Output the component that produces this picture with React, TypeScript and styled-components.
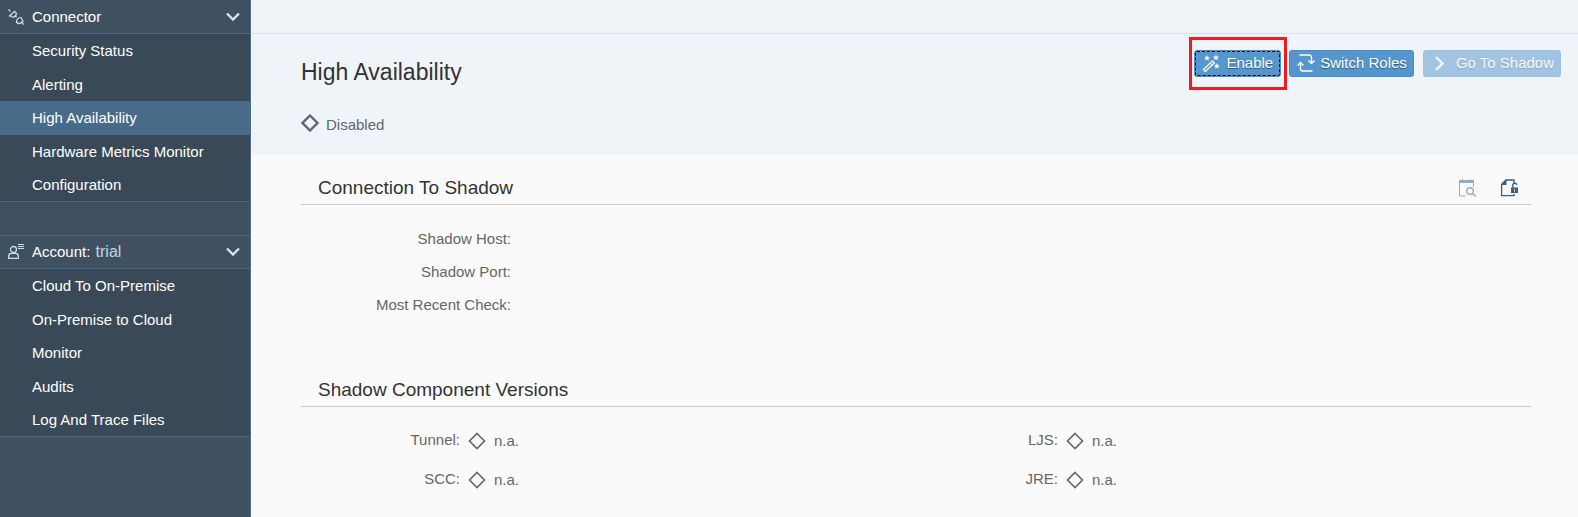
import React from "react";
import styled, { createGlobalStyle } from "styled-components";

const GlobalStyle = createGlobalStyle`
  * { box-sizing: border-box; }
  body {
    margin: 0;
    background: #fafafa;
    font: 15px/18px "Liberation Sans", Arial, sans-serif;
    color: #333;
  }
  h1, h2, ul, dl, dd, p { margin: 0; padding: 0; font-weight: normal; }
  button { font: inherit; cursor: pointer; }
`;

const Shell = styled.div`
  display: grid;
  grid-template-columns: 251px minmax(0, 1fr);
  min-height: 100vh;
`;

const Sidebar = styled.nav`
  display: flex;
  flex-direction: column;
  gap: 33px;
  background: #3f5161;
  border-right: 1px solid #4f6f8d;
  color: #fff;
`;

const GroupHeader = styled.button<{ $ruled?: boolean }>`
  display: flex;
  align-items: center;
  width: 100%;
  height: 34px;
  padding: 0 9px 0 8px;
  gap: 8px;
  border: 0;
  border-top: ${(p) => (p.$ruled ? "1px solid #4f677d" : "0")};
  border-bottom: 1px solid #4b6781;
  background: transparent;
  color: #fff;
  text-align: left;
`;

const GroupTitle = styled.span`
  flex: 1;
`;

const GroupValue = styled.span`
  margin-left: 1px;
  font-size: 16px;
  color: #c3d3e2;
`;

const NavList = styled.ul`
  display: grid;
  grid-template-rows: 34px 33px 34px 33px 33px;
  list-style: none;
  background: #3a4957;
  border-bottom: 1px solid #4b6781;
`;

const NavItem = styled.li`
  display: flex;
`;

const NavLink = styled.a<{ $active?: boolean }>`
  display: flex;
  flex: 1;
  align-items: center;
  padding-left: 32px;
  color: #fff;
  text-decoration: none;
  background: ${(p) => (p.$active ? "#486b89" : "transparent")};
`;

const TopBar = styled.div`
  height: 34px;
  background: #eff4f9;
  border-bottom: 1px solid #d1e0ee;
`;

const PageHeader = styled.header`
  display: flex;
  justify-content: space-between;
  align-items: flex-start;
  height: 121px;
  padding: 0 17px 0 50px;
  background: #eff4f9;
`;

const PageTitle = styled.h1`
  padding-top: 24px;
  font-size: 23px;
  line-height: 28px;
`;

const Status = styled.p`
  display: flex;
  align-items: flex-start;
  gap: 7px;
  padding-top: 28px;
  color: #5e696e;
`;

const StatusText = styled.span`
  padding-top: 2px;
`;

const Toolbar = styled.div`
  display: flex;
  align-items: center;
  padding-top: 3px;
`;

const Highlight = styled.div`
  padding: 10px 3px 10px 2px;
  border: 3px solid #ed1c24;
`;

const ActionButton = styled.button<{ $gap?: number }>`
  display: flex;
  align-items: center;
  gap: ${(p) => p.$gap ?? 5}px;
  height: 27px;
  margin: 0 0 0 ${(p) => (p.$gap ? 9 : 2)}px;
  padding: 0 6px 2px 7px;
  border: 1px solid #4a8bc6;
  border-radius: 3px;
  background: #5496cd;
  color: #fff;
  text-shadow: 0 1px 1px rgba(0, 0, 0, 0.4);
  &:disabled {
    opacity: 0.5;
    cursor: default;
  }
`;

const FocusedButton = styled(ActionButton)`
  gap: 6px;
  margin: 0;
  padding: 0 7px 2px;
  outline: 1px dashed #000;
  outline-offset: -2px;
`;

const Section = styled.section`
  margin: 0 47px 0 50px;
`;

const SectionHeader = styled.div`
  display: flex;
  justify-content: space-between;
  align-items: flex-end;
  height: 50px;
  padding: 0 13px 5px 17px;
  border-bottom: 1px solid #ccc;
`;

const SectionTitle = styled.h2`
  font-size: 19px;
  line-height: 22px;
`;

const IconBar = styled.div`
  display: flex;
  gap: 24px;
  padding-bottom: 2px;
`;

const IconButton = styled.button`
  display: flex;
  padding: 0;
  border: 0;
  background: none;
  &:disabled { opacity: 0.5; }
`;

const Details = styled.dl`
  display: grid;
  grid-template-columns: 210px 1fr;
  row-gap: 15px;
  padding: 25px 0 43px;
`;

const Label = styled.dt`
  color: #666;
  text-align: right;
`;

const Versions = styled.dl`
  display: grid;
  grid-template-columns: 1fr 1fr;
  row-gap: 20px;
  padding: 24px 0;
`;

const Version = styled.div`
  display: grid;
  grid-template-columns: 159px 1fr;
  column-gap: 8px;
  &:nth-child(even) { margin-left: -17px; }
`;

const VersionValue = styled.dd`
  display: flex;
  align-items: center;
  gap: 8px;
  padding-top: 1px;
  color: #5e696e;
`;

const Icon = ({ size = 18, children }: { size?: number; children: React.ReactNode }) => (
  <svg width={size} height={size} viewBox={`0 0 ${size} ${size}`} fill="none" aria-hidden="true">
    {children}
  </svg>
);

const Diamond = ({ weight = 1.6 }: { weight?: number }) => (
  <Icon>
    <path d="M9 1.5 16.5 9 9 16.5 1.5 9Z" stroke="#5e696e" strokeWidth={weight} />
  </Icon>
);

const Chevron = () => (
  <Icon size={16}>
    <path d="m2 4.500 6 6 6-6" stroke="#cfe4f7" strokeWidth="2.4" />
  </Icon>
);

const PlugIcon = () => (
  <Icon size={16}>
    <g stroke="#c4dff6" strokeWidth="1.200">
      <path d="M.3.5 2.500 2.500M2 6.500l5-4.500M3 5.500c-.8 2 .8 3 3.300 2.300M6 3c2-.4 2.700 1.500 1.800 3M1 7.500l1.500-1.500M5.500 8.500l3.500-3.500M7 6.500l1.500 1.500" />
      <path d="M8.500 13.500c-.3-3 1.500-5 4.500-5l2 3.500-3 2.500ZM8 12.500l2.500 2.500M14 13.500l1.700 2" />
    </g>
  </Icon>
);

const AccountIcon = () => (
  <Icon size={16}>
    <g stroke="#c4dff6" strokeWidth="1.3">
      <circle cx="5.500" cy="5.500" r="3" />
      <path d="M.7 14.400v-2c0-2 1.300-3 2.800-3h4c1.500 0 2.800 1 2.800 3v2Z" />
      <path d="M10 .5h6M10 2.500h6M10 4.500h6" strokeWidth="1" />
    </g>
  </Icon>
);

const Star = ({ x, y }: { x: number; y: number }) => (
  <path
    transform={`translate(${x} ${y})`}
    d="M0-3 .8-.9 3-.9 1.300.6 2 2.800 0 1.500-2 2.800-1.300.6-3-.9-.8-.9Z"
    fill="#fff"
  />
);

const WandIcon = () => (
  <Icon>
    <path d="m1.500 15.500 9-8.500 1.800 1.900-9 8.500Z" stroke="#fff" strokeWidth="1.300" />
    <path d="m8 9 1.800 1.800" stroke="#fff" />
    <Star x={5} y={4} />
    <Star x={14} y={3.5} />
    <Star x={14.8} y={12} />
  </Icon>
);

const SwitchIcon = () => (
  <Icon>
    <g stroke="#fff" strokeWidth="1.4">
      <path d="M2.500 1h9.500a2.500 2.500 0 0 1 2.500 2.500V9M11.500 6.500l3 3 3-3" />
      <path d="M15.500 17H6a2.500 2.500 0 0 1-2.500-2.500V9M.5 11.500l3-3 3 3" />
    </g>
  </Icon>
);

const ForwardIcon = () => (
  <Icon size={16}>
    <path d="m5 2 6.500 6.500L5 15" stroke="#fff" strokeWidth="2.4" />
  </Icon>
);

const CalendarSearchIcon = () => (
  <Icon>
    <path d="M1 1h15v3H1Z" fill="#346187" />
    <path d="M1.500 3v14h6M15.500 4v4M4.500 0v2M12.500 0v2" stroke="#346187" />
    <circle cx="12" cy="12" r="3.300" stroke="#346187" strokeWidth="1.400" />
    <path d="m14.500 14.500 3.500 3" stroke="#346187" strokeWidth="1.500" />
  </Icon>
);

const UnlockDocumentIcon = () => (
  <Icon>
    <path d="M1.600 5v11.700H14V15M5.500 1H14V4" stroke="#346187" strokeWidth="1.300" />
    <path d="M1 6V5l4.500-4.500H6.500V6Z" fill="#346187" />
    <path d="M11 8.500h7V14h-7Z" fill="#346187" />
    <path d="M12.800 9V6.500a2 2 0 0 1 4-.5" stroke="#346187" strokeWidth="1.300" />
    <path d="M14 10.500h1v2h-1Z" fill="#fff" />
  </Icon>
);

const connectorItems = ["Security Status", "Alerting", "High Availability", "Hardware Metrics Monitor", "Configuration"];
const accountItems = ["Cloud To On-Premise", "On-Premise to Cloud", "Monitor", "Audits", "Log And Trace Files"];
const details = ["Shadow Host:", "Shadow Port:", "Most Recent Check:"];
const versions = ["Tunnel:", "LJS:", "SCC:", "JRE:"];

const NavItems = ({ items }: { items: string[] }) => (
  <NavList>
    {items.map((item) => (
      <NavItem key={item}>
        <NavLink href="#" $active={item === "High Availability"}>{item}</NavLink>
      </NavItem>
    ))}
  </NavList>
);

export default function App() {
  return (
    <>
      <GlobalStyle />
      <Shell>
        <Sidebar>
          <div>
            <GroupHeader aria-expanded="true">
              <PlugIcon />
              <GroupTitle>Connector</GroupTitle>
              <Chevron />
            </GroupHeader>
            <NavItems items={connectorItems} />
          </div>
          <div>
            <GroupHeader $ruled aria-expanded="true">
              <AccountIcon />
              <GroupTitle>Account: <GroupValue>trial</GroupValue></GroupTitle>
              <Chevron />
            </GroupHeader>
            <NavItems items={accountItems} />
          </div>
        </Sidebar>
        <main>
          <TopBar />
          <PageHeader>
            <div>
              <PageTitle>High Availability</PageTitle>
              <Status><Diamond weight={2.4} /><StatusText>Disabled</StatusText></Status>
            </div>
            <Toolbar>
              <Highlight>
                <FocusedButton><WandIcon />Enable</FocusedButton>
              </Highlight>
              <ActionButton><SwitchIcon />Switch Roles</ActionButton>
              <ActionButton $gap={9} disabled><ForwardIcon />Go To Shadow</ActionButton>
            </Toolbar>
          </PageHeader>
          <Section>
            <SectionHeader>
              <SectionTitle>Connection To Shadow</SectionTitle>
              <IconBar>
                <IconButton disabled aria-label="Check connection"><CalendarSearchIcon /></IconButton>
                <IconButton aria-label="Unlock configuration"><UnlockDocumentIcon /></IconButton>
              </IconBar>
            </SectionHeader>
            <Details>
              {details.map((label) => (
                <React.Fragment key={label}>
                  <Label>{label}</Label>
                  <dd />
                </React.Fragment>
              ))}
            </Details>
          </Section>
          <Section>
            <SectionHeader>
              <SectionTitle>Shadow Component Versions</SectionTitle>
            </SectionHeader>
            <Versions>
              {versions.map((label) => (
                <Version key={label}>
                  <Label>{label}</Label>
                  <VersionValue><Diamond />n.a.</VersionValue>
                </Version>
              ))}
            </Versions>
          </Section>
        </main>
      </Shell>
    </>
  );
}
